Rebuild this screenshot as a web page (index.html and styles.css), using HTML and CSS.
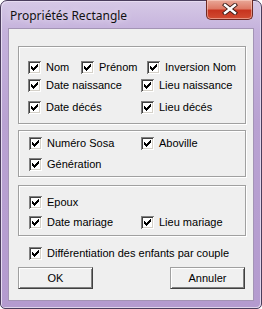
FILE: index.html
```html
<!DOCTYPE html>
<html lang="fr">
<head>
    <meta charset="UTF-8">
    <title>Propriétés Rectangle</title>
    <link rel="stylesheet" href="styles.css">
</head>
<body>
    <div class="window">
        <div class="titlebar">
            <span class="title">Propriétés Rectangle</span>
            <span class="close">
                <svg width="16" height="12" viewBox="0 0 16 12">
                    <path d="M3 2 L13 10 M13 2 L3 10" stroke="#3a1a16" stroke-width="4.2" stroke-linecap="square"/>
                    <path d="M3 2 L13 10 M13 2 L3 10" stroke="#fff" stroke-width="2.4" stroke-linecap="square"/>
                </svg>
            </span>
        </div>
        <div class="client">
            <div class="group g1">
                <div class="row row-three">
                    <span class="check"><span class="box"><svg width="13" height="13"><path d="M3 5h1v3H3z M4 6h1v3H4z M5 7h1v3H5z M6 6h1v3H6z M7 5h1v3H7z M8 4h1v3H8z M9 3h1v3H9z"/></svg></span>Nom</span>
                    <span class="check"><span class="box"><svg width="13" height="13"><path d="M3 5h1v3H3z M4 6h1v3H4z M5 7h1v3H5z M6 6h1v3H6z M7 5h1v3H7z M8 4h1v3H8z M9 3h1v3H9z"/></svg></span>Prénom</span>
                    <span class="check"><span class="box"><svg width="13" height="13"><path d="M3 5h1v3H3z M4 6h1v3H4z M5 7h1v3H5z M6 6h1v3H6z M7 5h1v3H7z M8 4h1v3H8z M9 3h1v3H9z"/></svg></span>Inversion Nom</span>
                </div>
                <div class="row row-two r2">
                    <span class="check"><span class="box"><svg width="13" height="13"><path d="M3 5h1v3H3z M4 6h1v3H4z M5 7h1v3H5z M6 6h1v3H6z M7 5h1v3H7z M8 4h1v3H8z M9 3h1v3H9z"/></svg></span>Date naissance</span>
                    <span class="check"><span class="box"><svg width="13" height="13"><path d="M3 5h1v3H3z M4 6h1v3H4z M5 7h1v3H5z M6 6h1v3H6z M7 5h1v3H7z M8 4h1v3H8z M9 3h1v3H9z"/></svg></span>Lieu naissance</span>
                </div>
                <div class="row row-two r3">
                    <span class="check"><span class="box"><svg width="13" height="13"><path d="M3 5h1v3H3z M4 6h1v3H4z M5 7h1v3H5z M6 6h1v3H6z M7 5h1v3H7z M8 4h1v3H8z M9 3h1v3H9z"/></svg></span>Date décés</span>
                    <span class="check"><span class="box"><svg width="13" height="13"><path d="M3 5h1v3H3z M4 6h1v3H4z M5 7h1v3H5z M6 6h1v3H6z M7 5h1v3H7z M8 4h1v3H8z M9 3h1v3H9z"/></svg></span>Lieu décés</span>
                </div>
            </div>

            <div class="group g2">
                <div class="row row-two">
                    <span class="check"><span class="box"><svg width="13" height="13"><path d="M3 5h1v3H3z M4 6h1v3H4z M5 7h1v3H5z M6 6h1v3H6z M7 5h1v3H7z M8 4h1v3H8z M9 3h1v3H9z"/></svg></span>Numéro Sosa</span>
                    <span class="check"><span class="box"><svg width="13" height="13"><path d="M3 5h1v3H3z M4 6h1v3H4z M5 7h1v3H5z M6 6h1v3H6z M7 5h1v3H7z M8 4h1v3H8z M9 3h1v3H9z"/></svg></span>Aboville</span>
                </div>
                <div class="row row-two r2">
                    <span class="check"><span class="box"><svg width="13" height="13"><path d="M3 5h1v3H3z M4 6h1v3H4z M5 7h1v3H5z M6 6h1v3H6z M7 5h1v3H7z M8 4h1v3H8z M9 3h1v3H9z"/></svg></span>Génération</span>
                </div>
            </div>

            <div class="group g3">
                <div class="row row-two">
                    <span class="check"><span class="box"><svg width="13" height="13"><path d="M3 5h1v3H3z M4 6h1v3H4z M5 7h1v3H5z M6 6h1v3H6z M7 5h1v3H7z M8 4h1v3H8z M9 3h1v3H9z"/></svg></span>Epoux</span>
                </div>
                <div class="row row-two r2">
                    <span class="check"><span class="box"><svg width="13" height="13"><path d="M3 5h1v3H3z M4 6h1v3H4z M5 7h1v3H5z M6 6h1v3H6z M7 5h1v3H7z M8 4h1v3H8z M9 3h1v3H9z"/></svg></span>Date mariage</span>
                    <span class="check"><span class="box"><svg width="13" height="13"><path d="M3 5h1v3H3z M4 6h1v3H4z M5 7h1v3H5z M6 6h1v3H6z M7 5h1v3H7z M8 4h1v3H8z M9 3h1v3H9z"/></svg></span>Lieu mariage</span>
                </div>
            </div>

            <div class="row extra">
                <span class="check"><span class="box"><svg width="13" height="13"><path d="M3 5h1v3H3z M4 6h1v3H4z M5 7h1v3H5z M6 6h1v3H6z M7 5h1v3H7z M8 4h1v3H8z M9 3h1v3H9z"/></svg></span>Différentiation des enfants par couple</span>
            </div>

            <div class="buttons">
                <button type="button">OK</button>
                <button type="button">Annuler</button>
            </div>
        </div>
    </div>
</body>
</html>
```

FILE: styles.css
```css
body { margin: 0; background: #fff; font-family: "Liberation Sans", Arial, sans-serif; font-size: 11px; color: #000; }

.window { width: 262px; height: 309px; box-sizing: border-box; border: 1px solid #4a3d5c; border-radius: 7px 7px 5px 5px; padding: 0 7px 7px 7px; background: linear-gradient(to bottom, #d6c9e6 0, #c5b2dc 30px, #b9a2d2 120px, #b49bcf 100%); box-shadow: inset 1px 1px 0 #e6dcf1, inset -1px -1px 0 #e0d5ec; }

.titlebar { height: 27px; display: flex; align-items: flex-start; }
.title { font-family: "Noto Sans", "DejaVu Sans", sans-serif; font-size: 12px; margin: 6px 0 0 2px; color: #111; text-shadow: 0 0 6px #efe8f6; }
.close { margin: -1px 0 0 auto; margin-right: 1px; width: 47px; height: 20px; box-sizing: border-box; border: 1px solid #6e2a22; border-top: none; border-radius: 0 0 5px 5px; background: linear-gradient(to bottom, #e9a898 0, #de7a66 45%, #c7341f 55%, #d14c32 100%); box-shadow: inset 0 0 0 1px rgba(255,220,210,0.5); display: flex; align-items: center; justify-content: center; }
.close svg { display: block; margin-top: -1px; }

.client { height: 273px; box-sizing: border-box; border: 1px solid #a394b5; background: #efefef; padding: 17px 7px 0 9px; }

.group { box-sizing: border-box; width: 228px; border: 1px solid #a0a0a0; box-shadow: 1px 1px 0 #fff, inset 1px 1px 0 #fff; padding-left: 10px; }
.g1 { height: 78px; padding-top: 14px; padding-left: 9px; }
.g1 .r2 { margin-top: 5px; }
.g1 .r3 { margin-top: 9px; }
.g1 .row-two { grid-template-columns: 113px auto; }
.g2 { height: 47px; margin-top: 6px; padding-top: 6px; }
.g2 .r2 { margin-top: 8px; }
.g3 { height: 51px; margin-top: 8px; padding-top: 10px; }
.g3 .r2 { margin-top: 7px; }

.row { display: grid; height: 13px; }
.row-three { grid-template-columns: 53px 66px auto; }
.row-two { grid-template-columns: 112px auto; }
.extra { margin: 11px 0 0 11px; }

.check { display: flex; align-items: center; gap: 5px; height: 13px; line-height: 13px; white-space: nowrap; }
.box { width: 13px; height: 13px; flex: none; background: #fff; box-shadow: inset 1px 1px 0 #808080, inset -1px -1px 0 #fff, inset 2px 2px 0 #404040, inset -2px -2px 0 #d4d0c8; }
.box svg { display: block; shape-rendering: crispEdges; }

.buttons { display: flex; justify-content: space-between; width: 227px; margin-top: 7px; }
.buttons button { width: 75px; height: 22px; padding: 0; font-family: "Liberation Sans", Arial, sans-serif; font-size: 11px; color: #000; background: #f0f0f0; border: 1px solid; border-color: #a0a0a0 #404040 #404040 #a0a0a0; box-shadow: inset 1px 1px 0 #fff, inset -1px -1px 0 #808080; }
```
